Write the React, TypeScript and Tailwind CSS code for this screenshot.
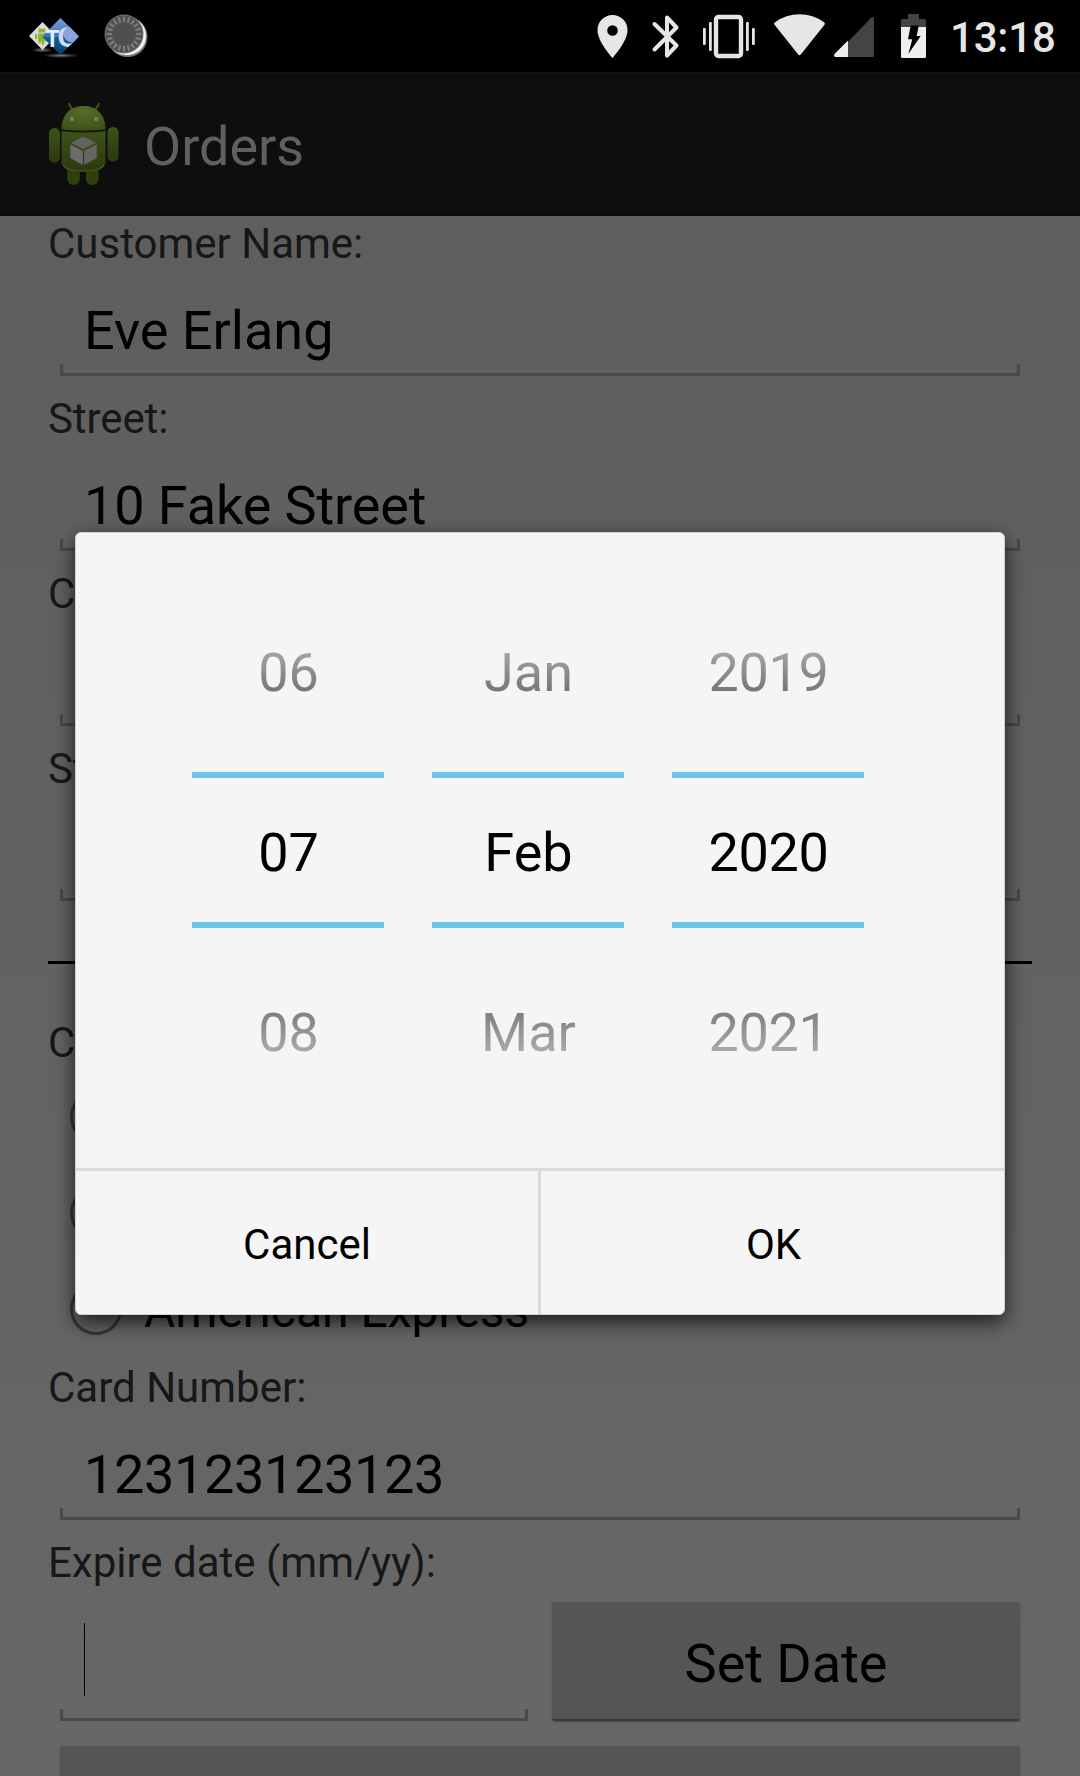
import React from "react";

const TICKS = Array.from({ length: 20 }, (_, i) => (i * 360) / 20);

function StatusBar() {
  return (
    <div className="flex h-[72px] w-full items-center bg-black">
      <svg className="ml-[26px]" width="56" height="72" viewBox="26 0 56 72">
        <defs>
          <linearGradient id="blueTile" x1="0" y1="0" x2="0" y2="1">
            <stop offset="0" stopColor="#7f9fd6" />
            <stop offset="0.5" stopColor="#3a73bb" />
            <stop offset="0.52" stopColor="#0f5d9c" />
            <stop offset="1" stopColor="#0a3c63" />
          </linearGradient>
          <radialGradient id="tileGlow">
            <stop offset="0" stopColor="#777" />
            <stop offset="1" stopColor="#000" />
          </radialGradient>
          <clipPath id="tileClip">
            <path d="M60.500 18 79 36.500 60.500 55 42 36.500Z" />
          </clipPath>
        </defs>
        <ellipse cx="42" cy="50" rx="11" ry="2.500" fill="url(#tileGlow)" />
        <ellipse cx="61" cy="55.500" rx="18" ry="2.500" fill="url(#tileGlow)" />
        <path d="M42.500 22 56 36 42.500 50 29 36Z" fill="#dcdcdc" />
        <path d="M38 32.500a4 4 0 0 1 8 0ZM38 33.500h8v8h-2v3.500h-2v-3.500h-1v2h-2v-2h-1ZM35 34h2v5h-2Z" fill="#8fb52f" />
        <path d="m39 28 1.500 2M45 28l-1.500 2" stroke="#8fb52f" />
        <path d="M60.500 18 79 36.500 60.500 55 42 36.500Z" fill="url(#blueTile)" />
        <g clipPath="url(#tileClip)">
          <text x="57.500" y="46.500" fontSize="29" fontWeight="700" fontFamily="Liberation Sans, sans-serif" fill="#cfdcf0">C</text>
          <circle cx="72" cy="34" r="8.500" fill="#8ba3d8" />
        </g>
        <text x="45.300" y="46.500" fontSize="23" fontWeight="700" fontFamily="Liberation Sans, sans-serif" fill="#e8edf4">T</text>
      </svg>
      <svg className="ml-[20px]" width="48" height="72" viewBox="102 0 48 72">
        <circle cx="127.500" cy="37" r="20" fill="#777" />
        <circle cx="126.800" cy="36" r="19.300" fill="#f2f2f2" />
        <circle cx="124" cy="34" r="19.500" fill="#6c6c6c" />
        <circle cx="124" cy="34" r="18.300" fill="#4f4f4f" />
        {TICKS.map((a) => (
          <path key={a} d="M124 22v-5.500" stroke="#7c7c7c" strokeWidth="2.200" transform={`rotate(${a} 124 34)`} />
        ))}
      </svg>
      <svg className="ml-[446px]" width="32" height="72" viewBox="596 0 32 72">
        <path fillRule="evenodd" fill="#e6e6e6" d="M612.500 15a15 15 0 0 1 15 15.500c0 11-15 27.500-15 27.500s-15-16.500-15-27.500a15 15 0 0 1 15-15.500Zm0 10.200a5.300 5.300 0 1 0 0 10.600 5.300 5.300 0 0 0 0-10.600Z" />
      </svg>
      <svg className="ml-[22px]" width="32" height="72" viewBox="650 0 32 72">
        <path d="M654.500 24 676.500 45.500 667 55.500V17.500L676.500 27.500 654.500 49.500" fill="none" stroke="#e6e6e6" strokeWidth="4" strokeLinecap="round" strokeLinejoin="round" />
      </svg>
      <svg className="ml-[18px]" width="58" height="72" viewBox="700 0 58 72" fill="#e6e6e6">
        <rect x="716" y="17" width="25" height="39" rx="2.500" fill="none" stroke="#e6e6e6" strokeWidth="4.400" />
        <rect x="703" y="28" width="2.800" height="17" rx="1" />
        <rect x="709" y="22" width="2.800" height="29" rx="1" />
        <rect x="746" y="22" width="2.800" height="29" rx="1" />
        <rect x="752" y="28" width="2.800" height="17" rx="1" />
      </svg>
      <svg className="ml-[14px]" width="56" height="72" viewBox="772 0 56 72">
        <path fill="#e6e6e6" d="M774.300 24.500Q773.500 23 775 22.200 786 14.300 799.500 14.300T824 22.200Q825.500 23 824.700 24.500L801 54.300Q799.500 56 798 54.300Z" />
      </svg>
      <svg className="ml-[4px]" width="44" height="72" viewBox="832 0 44 72">
        <path fill="#444" d="M848 57V41.700L871.500 17.600Q874 16 874 19V55.500Q874 57 872.500 57Z" />
        <path fill="#eee" d="M848 57V40.500L834.500 54Q833 57 836 57Z" />
      </svg>
      <svg className="ml-[23px]" width="30" height="72" viewBox="899 0 30 72">
        <path fill="#444" d="M908 14h11v5h5.500q1.500 0 1.500 1.500V27H901v-6.500q0-1.500 1.500-1.500h5.500Z" />
        <path fill="#eee" d="M901 27h25v29.500q0 1.500-1.500 1.500h-22q-1.500 0-1.500-1.500Z" />
        <path fill="#000" d="M910.700 25.500h8L916.700 36h4L908.300 54l4-14.700H908Z" />
      </svg>
      <span className="ml-[21px] pt-[3px] text-[42px] leading-[69px] font-medium tracking-[-0.2px] text-[#e6e6e6]">13:18</span>
    </div>
  );
}

function AndroidIcon() {
  return (
    <svg className="mt-[2px] ml-[42px]" width="84" height="96" viewBox="42 96 84 96">
      <defs>
        <linearGradient id="bodyGreen" x1="0" y1="0" x2="0" y2="1">
          <stop offset="0" stopColor="#3e5215" />
          <stop offset="1" stopColor="#2b3a0f" />
        </linearGradient>
        <radialGradient id="headGreen" cx="0.5" cy="0.2" r="0.8">
          <stop offset="0" stopColor="#566c25" />
          <stop offset="1" stopColor="#3e5218" />
        </radialGradient>
      </defs>
      <path d="m69 104 4.500 7M99 104l-4.500 7" stroke="#415319" strokeWidth="2.200" strokeLinecap="round" />
      <rect x="67.300" y="160" width="12.500" height="25" rx="6" fill="#2f400e" />
      <rect x="86" y="160" width="12.500" height="25" rx="6" fill="#2f400e" />
      <rect x="49" y="128" width="11" height="34.500" rx="5.200" fill="url(#bodyGreen)" />
      <rect x="107.500" y="127" width="11" height="34.500" rx="5.200" fill="url(#bodyGreen)" />
      <path d="M61.500 129.500C61.500 114 71 106 83.500 106s22 8 22 23.500Q84 132 61.500 129.500Z" fill="url(#headGreen)" />
      <path d="M61.500 130.500q22 3 44 0V162q0 10-22 10t-22-10Z" fill="url(#bodyGreen)" />
      <path d="M61.500 130.200q22 3 44 0" stroke="#111806" strokeWidth="1.600" fill="none" />
      <path d="M63 165q4 6 20.500 6t20.500-6" stroke="#485c1c" fill="none" strokeWidth="1.200" />
      <circle cx="72" cy="119" r="2.200" fill="#777" />
      <circle cx="96.300" cy="119" r="2.200" fill="#777" />
      <path d="M83.500 136.500 96 143 83.500 149 71 143Z" fill="#626262" />
      <path d="M70.300 144.500 82.800 150.800V165L70.300 158Z" fill="#6b6b6b" />
      <path d="M96.700 144.500 84.200 150.800V165L96.700 158Z" fill="#666" />
    </svg>
  );
}

function Label({ children }: { children: React.ReactNode }) {
  return <div className="ml-[48px] text-[42px] leading-[55px] text-[#171717]">{children}</div>;
}

function Bracket() {
  return <div className="h-[12px] border-x-[3px] border-b-[3px] border-[#494949]" />;
}

function Field({ label, value }: { label: string; value?: string }) {
  return (
    <div className="h-[175px]">
      <Label>{label}</Label>
      <div className="mx-[60px]">
        <div className="h-[93px] pt-[28px] pl-[24px] text-[54px] leading-[63px] text-black">{value}</div>
        <Bracket />
      </div>
    </div>
  );
}

function Radio({ label }: { label: string }) {
  return (
    <div className="flex h-[96px] items-center pl-[70px]">
      <span className="h-[52px] w-[52px] rounded-full border-[3px] border-[#363636]" />
      <span className="ml-[22px] pt-[3px] text-[48px] leading-[93px] text-black">{label}</span>
    </div>
  );
}

function PickerColumn({ prev, current, next }: { prev: string; current: string; next: string }) {
  return (
    <div className="w-[192px] pt-[109px] text-center text-[54px] leading-[63px]">
      <div className="bg-linear-to-b from-[#b2b2b2] to-[#686868] bg-clip-text pl-px text-transparent">{prev}</div>
      <div className="mt-[68px] h-[6px] bg-[#6bc7ea]" />
      <div className="mt-[43px] pl-px text-black">{current}</div>
      <div className="mt-[38px] h-[6px] bg-[#6bc7ea]" />
      <div className="mt-[73px] bg-linear-to-b from-[#747474] to-[#b7b7b7] bg-clip-text pl-px text-transparent">{next}</div>
    </div>
  );
}

function DateDialog() {
  return (
    <div className="absolute top-[532px] left-[75px] h-[783px] w-[930px] rounded-[6px] border border-[#d2d2d2] bg-[#f5f5f5] shadow-[0_7px_20px_rgba(0,0,0,0.72)]">
      <div className="-mx-px -mt-px flex h-[636px] gap-[48px] pl-[117px]">
        <PickerColumn prev="06" current="07" next="08" />
        <PickerColumn prev="Jan" current="Feb" next="Mar" />
        <div className="tracking-[-0.3px]">
          <PickerColumn prev="2019" current="2020" next="2021" />
        </div>
      </div>
      <div className="flex h-[146px] border-t-[3px] border-[#dadada] text-[42px] leading-[145px] text-black">
        <button className="w-[465px] border-r-[3px] border-[#dadada] pt-px">Cancel</button>
        <button className="flex-1 pt-px pl-[2px]">OK</button>
      </div>
    </div>
  );
}

export default function App() {
  return (
    <div className="relative h-[1776px] w-[1080px] overflow-hidden bg-[#5f5f5f] font-['Roboto',sans-serif]">
      <StatusBar />
      <header className="flex h-[144px] items-center border-t border-b-[3px] border-t-[#151515] border-b-[#0a0a0a] bg-[#0e0e0e]">
        <AndroidIcon />
        <h1 className="ml-[18px] pt-[7px] text-[54px] leading-[133px] text-[#606060]">Orders</h1>
      </header>
      <main className="h-[1560px] bg-linear-to-b from-[#5e5e5e] to-[#676767]">
        <Field label="Customer Name:" value="Eve Erlang" />
        <div className="tracking-[-0.1px]">
          <Field label="Street:" value="10 Fake Street" />
        </div>
        <Field label="City:" />
        <Field label="State:" />
        <div className="mx-[48px] mt-[45px] mb-[51px] h-[3px] bg-black" />
        <Label>Card:</Label>
        <div className="-mt-px">
          <Radio label="Visa" />
          <Radio label="MasterCard" />
          <Radio label="American Express" />
        </div>
        <Label>
          <span className="block pt-[3px]">Card Number:</span>
        </Label>
        <div className="mx-[60px] mb-[15px]">
          <div className="h-[93px] pt-[28px] pl-[24px] text-[54px] leading-[63px] tracking-[-0.35px] text-black">123123123123</div>
          <Bracket />
        </div>
        <Label>Expire date (mm/yy):</Label>
        <div className="mx-[60px] flex h-[131px] items-end gap-[24px]">
          <div className="flex-1">
            <div className="mb-[13px] ml-[24px] h-[73px] w-px bg-black" />
            <Bracket />
          </div>
          <button className="h-[119px] flex-1 rounded-[3px] border-b-[2px] border-[#3b3b3b] bg-[#555] pt-[6px] text-[54px] leading-[111px] text-black shadow-[0_1px_2px_#4a4a4a]">
            Set Date
          </button>
        </div>
        <div className="mx-[60px] mt-[25px] h-[120px] rounded-[3px] bg-[#555] shadow-[0_1px_2px_#4a4a4a]" />
      </main>
      <DateDialog />
    </div>
  );
}
